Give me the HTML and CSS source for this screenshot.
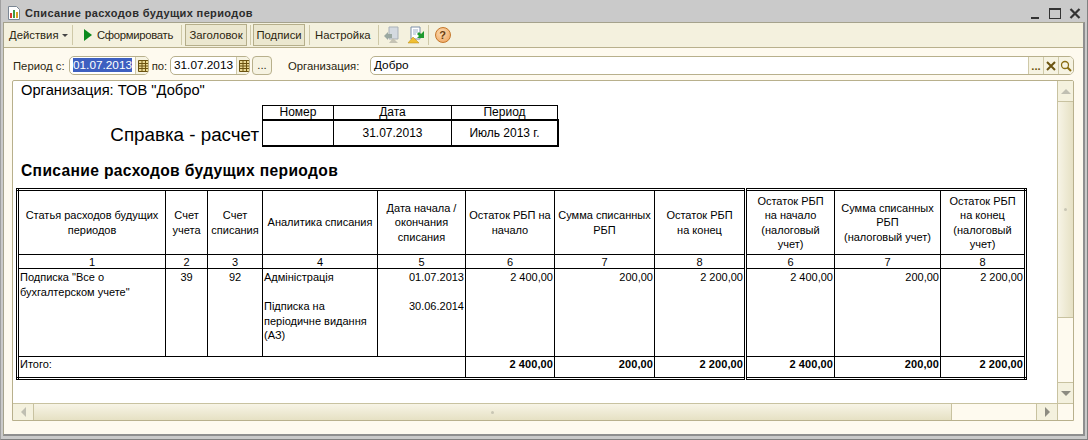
FILE: index.html
```html
<!DOCTYPE html>
<html lang="ru">
<head>
  <meta charset="UTF-8">
  <title>Списание расходов будущих периодов</title>
  <link rel="stylesheet" href="styles.css">
</head>
<body>

<div class="window">
  <div class="titlebar">
    <svg class="title-icon" width="14" height="14" viewBox="0 0 14 14">
      <path d="M1.500 .5h8l3 3v10h-11z" fill="#fff" stroke="#7b8794"/>
      <rect x="3" y="7" width="2" height="5" fill="#d6392c"/>
      <rect x="6" y="4" width="2" height="8" fill="#3f9a45"/>
      <rect x="9" y="6" width="2" height="6" fill="#d9a020"/>
    </svg>
    <span class="title-text">Списание расходов будущих периодов</span>
    <div class="win-buttons">
      <svg width="14" height="14" viewBox="0 0 14 14"><rect x="3" y="11" width="8" height="2" fill="#333"/></svg>
      <svg width="14" height="14" viewBox="0 0 14 14"><rect x="1.500" y="2.500" width="11" height="10" fill="none" stroke="#333"/><rect x="1" y="2" width="12" height="2" fill="#333"/></svg>
      <svg width="14" height="14" viewBox="0 0 14 14"><path d="M2.500 3l9 9M11.500 3l-9 9" stroke="#333" stroke-width="2.200"/></svg>
    </div>
  </div>

  <div class="panel">
    <div class="toolbar">
      <span class="tool menu">Действия <i class="caret"></i></span>
      <i class="sep"></i>
      <span class="tool run">
        <svg width="10" height="14" viewBox="0 0 10 14"><path d="M1 1l8 6-8 6z" fill="#0a8a1c"/></svg>
        <span class="run-text">Сформировать</span>
      </span>
      <i class="sep"></i>
      <span class="tool toggle toggle-head">Заголовок</span>
      <i class="sep"></i>
      <span class="tool toggle toggle-sign">Подписи</span>
      <i class="sep"></i>
      <span class="tool setup">Настройка</span>
      <i class="sep"></i>
      <svg class="tool-icon" width="18" height="18" viewBox="0 0 18 18">
        <path d="M6 1h9v12H6z" fill="#d4dae0" stroke="#a9b1b8"/>
        <path d="M1 10l4-4v2h4v4H5v2z" fill="#9aa8a0"/>
        <path d="M6 17l4-5 5 5z" fill="#c5c3b4"/>
      </svg>
      <svg class="tool-icon next-icon" width="18" height="18" viewBox="0 0 18 18">
        <path d="M4 1h9v12H4z" fill="#fff" stroke="#7d8fa8"/>
        <path d="M6 4h5M6 6h5M6 8h3" stroke="#9fb1c9"/>
        <path d="M17 5v7h-7l2-2-2-2 2-2 2 2z" fill="#1f9a30"/>
        <path d="M1 17l5-6 6 6z" fill="#f0bf33" stroke="#b98a12" stroke-width=".5"/>
      </svg>
      <i class="sep"></i>
      <span class="help">?</span>
    </div>

    <div class="filters">
      <label class="lbl lbl-from">Период с:</label>
      <span class="field date-field">
        <span class="field-text"><span class="selected">01.07.2013</span></span>
        <span class="field-btn">
          <svg class="cal" width="11" height="12" viewBox="0 0 11 12"><path d="M.5.500h10v11H.500zM.5 3.500h10M.5 6h10M.5 8.500h10M4 .5v11M7.500.500v11" fill="#e8d894" stroke="#6b5310"/></svg>
        </span>
      </span>
      <label class="lbl lbl-to">по:</label>
      <span class="field date-field">
        <span class="field-text">31.07.2013</span>
        <span class="field-btn">
          <svg class="cal" width="11" height="12" viewBox="0 0 11 12"><path d="M.5.500h10v11H.500zM.5 3.500h10M.5 6h10M.5 8.500h10M4 .5v11M7.500.500v11" fill="#e8d894" stroke="#6b5310"/></svg>
        </span>
      </span>
      <span class="dots-btn">...</span>
      <label class="lbl lbl-org">Организация:</label>
      <span class="field org-field">
        <span class="field-text">Добро</span>
        <span class="field-btn end-btn dots">...</span>
        <span class="field-btn end-btn">
          <svg width="10" height="10" viewBox="0 0 10 10"><path d="M1 1l8 8M9 1l-8 8" stroke="#6b5310" stroke-width="2"/></svg>
        </span>
        <span class="field-btn end-btn">
          <svg width="12" height="12" viewBox="0 0 12 12"><circle cx="5" cy="5" r="3.500" fill="none" stroke="#8a6d14" stroke-width="1.300"/><path d="M7.500 7.500l3.500 3.500" stroke="#8a6d14" stroke-width="2"/></svg>
        </span>
      </span>
    </div>

    <div class="sheet">
      <div class="report">
        <div class="org-line">Организация: ТОВ "Добро"</div>
        <div class="doc-head">
          <div class="doc-title">Справка - расчет</div>
          <table class="doc-table">
            <tr class="doc-labels"><td>Номер</td><td>Дата</td><td>Период</td></tr>
            <tr class="doc-values"><td></td><td>31.07.2013</td><td>Июль 2013 г.</td></tr>
          </table>
        </div>
        <div class="report-title">Списание расходов будущих периодов</div>

        <table class="grid">
          <colgroup>
            <col class="c1"><col class="c2"><col class="c3"><col class="c4"><col class="c5"><col class="c6">
            <col class="c7"><col class="c8"><col class="c9"><col class="c10"><col class="c11">
          </colgroup>
          <tr class="head-row">
            <td>Статья расходов будущих<br>периодов</td>
            <td>Счет<br>учета</td>
            <td>Счет<br>списания</td>
            <td>Аналитика списания</td>
            <td>Дата начала /<br>окончания<br>списания</td>
            <td>Остаток РБП на<br>начало</td>
            <td>Сумма списанных<br>РБП</td>
            <td>Остаток РБП<br>на конец</td>
            <td class="dbl">Остаток РБП<br>на начало<br>(налоговый<br>учет)</td>
            <td>Сумма списанных<br>РБП<br>(налоговый учет)</td>
            <td>Остаток РБП<br>на конец<br>(налоговый<br>учет)</td>
          </tr>
          <tr class="num-row">
            <td>1</td><td>2</td><td>3</td><td>4</td><td>5</td><td>6</td><td>7</td><td>8</td><td class="dbl">6</td><td>7</td><td>8</td>
          </tr>
          <tr class="data-row">
            <td>Подписка "Все о<br>бухгалтерском учете"</td>
            <td class="mid">39</td>
            <td class="mid">92</td>
            <td>Адміністрація<br><br>Підписка на<br>періодичне видання<br>(АЗ)</td>
            <td class="num">01.07.2013<br><br>30.06.2014</td>
            <td class="num">2 400,00</td>
            <td class="num">200,00</td>
            <td class="num">2 200,00</td>
            <td class="num dbl">2 400,00</td>
            <td class="num">200,00</td>
            <td class="num">2 200,00</td>
          </tr>
          <tr class="total-row">
            <td colspan="5">Итого:</td>
            <td class="sum">2 400,00</td>
            <td class="sum">200,00</td>
            <td class="sum">2 200,00</td>
            <td class="sum dbl">2 400,00</td>
            <td class="sum">200,00</td>
            <td class="sum">2 200,00</td>
          </tr>
        </table>
      </div>

      <div class="vbar">
        <span class="bar-btn"><i class="arrow up"></i></span>
        <span class="vthumb"><i class="grip"></i></span>
        <span class="bar-rest"></span>
        <span class="bar-btn"><i class="arrow down"></i></span>
      </div>
      <div class="hbar">
        <span class="bar-btn"><i class="arrow left"></i></span>
        <span class="hthumb"><i class="grip"></i></span>
        <span class="bar-rest"></span>
        <span class="bar-btn"><i class="arrow right"></i></span>
      </div>
      <div class="corner"></div>
    </div>
  </div>
</div>

</body>
</html>
```

FILE: styles.css
```css
* { box-sizing: border-box; }
html, body { margin: 0; height: 100%; overflow: hidden; }
body { font-family: "Liberation Sans", Arial, sans-serif; font-size: 11px; color: #000; background: #fff; }

.window {
  width: 1088px;
  height: 440px;
  display: flex;
  flex-direction: column;
  padding: 1px 2px 3px 2px;
  background: #cacaca;
  border-bottom: 1px solid #808080;
  border-right: 1px solid #808080;
  border-left: 1px solid #a0a0a0;
}

/* title */
.titlebar {
  height: 21px;
  flex: none;
  display: flex;
  align-items: center;
  padding: 2px 3px 0 4px;
}
.title-icon { margin-right: 4px; }
.title-text {
  font-weight: bold;
  font-size: 11px;
  letter-spacing: .37px;
  color: #2c2c2c;
}
.win-buttons { margin-left: auto; display: flex; gap: 6px; margin-right: 0; }

.panel {
  flex: 1;
  display: flex;
  flex-direction: column;
  background: #fefaef;
  border: 1px solid #a5a28c;
  border-right: 2px solid #8f8f8f;
  border-bottom: 2px solid #8f8f8f;
  min-height: 0;
}

/* toolbar */
.toolbar {
  height: 25px;
  flex: none;
  display: flex;
  align-items: center;
  padding-left: 5px;
  background: #f4f1de;
  border-bottom: 1px solid #b8b08c;
  font-size: 11.300px;
  color: #2b2610;
}
.tool { display: flex; align-items: center; height: 22px; white-space: nowrap; }
.menu { width: 59px; gap: 3px; }
.caret { width: 0; height: 0; border: 3px solid transparent; border-top: 3px solid #444; border-bottom: 0; }
.run { gap: 4px; padding: 0 4px 0 6px; }
.run-text { letter-spacing: -.3px; }
.toggle { justify-content: center; background: #ebe7cf; border: 1px solid #b5ae8a; }
.toggle-head { width: 62px; margin: 0 -1px; }
.toggle-sign { width: 52px; margin-left: -2px; }
.setup { padding: 0 3px 0 1px; }
.sep { width: 1px; height: 20px; background: #cfc9a8; margin: 0 4px; flex: none; }
.next-icon { margin: 0 -1px 0 6px; }
.help {
  width: 16px;
  height: 16px;
  margin-left: 2px;
  border-radius: 50%;
  background: radial-gradient(circle at 40% 35%, #fbdcb4, #ee9f55);
  border: 1px solid #c5772a;
  font-weight: bold;
  font-size: 11px;
  line-height: 14px;
  text-align: center;
  color: #6b3d10;
}

/* filter row */
.filters {
  height: 32px;
  flex: none;
  display: flex;
  align-items: center;
  padding: 3px 9px 0 8px;
  font-size: 11.300px;
  color: #2b2610;
}
.lbl { white-space: nowrap; }
.lbl-from { width: 57px; padding-left: 1px; }
.lbl-to { width: 21px; text-align: center; }
.lbl-org { margin: 0 12px 0 16px; width: 70px; }
.field {
  display: flex;
  align-items: stretch;
  height: 19px;
  background: #fff;
  border: 1px solid #b8b08c;
  border-radius: 5px;
  overflow: hidden;
  color: #000;
}
.date-field { width: 80px; }
.org-field { flex: 1; }
.field-text { flex: 1; padding: 2px 3px; white-space: nowrap; line-height: 13px; font-size: 11.800px; }
.selected { background: #3d5fc0; color: #fff; }
.field-btn {
  width: 15px;
  flex: none;
  display: flex;
  align-items: center;
  justify-content: center;
  background: #f6f3e2;
  border-left: 1px solid #cfc9a8;
  color: #6b5310;
}
.dots { font-weight: bold; align-items: flex-end; padding-bottom: 2px; }
.dots-btn {
  width: 20px;
  height: 19px;
  margin-left: 2px;
  text-align: center;
  line-height: 17px;
  background: #f6f3e2;
  border: 1px solid #b8b08c;
  border-radius: 4px;
}

/* report sheet */
.sheet {
  flex: 1;
  min-height: 0;
  display: grid;
  grid-template-columns: 1fr 16px;
  grid-template-rows: 1fr 17px;
  margin: 0 9px 13px 8px;
  background: #fff;
  border: 1px solid #b8b08c;
  border-radius: 2px 2px 0 0;
}
.report { overflow: hidden; padding: 0 0 0 3px; min-width: 0; min-height: 0; }
.org-line { font-size: 14.700px; line-height: 18px; padding-left: 5px; margin-bottom: 7px; }
.doc-head { display: flex; align-items: flex-end; height: 40px; }
.doc-title { width: 246px; text-align: right; font-size: 18.800px; line-height: 22px; padding: 1px 3px 0 0; }

.doc-table { width: 295px; border-collapse: collapse; table-layout: fixed; text-align: center; font-size: 12px; }
.doc-table td { padding: 0; }
.doc-labels td { height: 14px; line-height: 12px; border: 1px solid #000; }
.doc-values td { height: 26px; border: 1px solid #000; border-top-width: 2px; }
.doc-values { outline: 1px solid #000; }
.doc-table td:nth-child(1) { width: 71px; }
.doc-table td:nth-child(2) { width: 118px; }
.doc-table td:nth-child(3) { width: 106px; }

.report-title {
  font-weight: bold;
  font-size: 15.600px;
  line-height: 18px;
  padding-left: 5px;
  margin: 16px 0 8px 0;
  letter-spacing: .35px;
}

.grid {
  width: 1009px;
  table-layout: fixed;
  border-collapse: collapse;
  border: 3px double #000;
  line-height: 14.500px;
}
.grid td { border: 1px solid #000; padding: 0 1px; }
.grid td.dbl { border-left: 3px double #000; }
.c1 { width: 148px; } .c2 { width: 42px; } .c3 { width: 55px; } .c4 { width: 115px; }
.c5 { width: 88px; } .c6 { width: 89px; } .c7 { width: 100px; } .c8 { width: 91px; }
.c9 { width: 89px; } .c10 { width: 106px; } .c11 { width: 85px; }
.head-row { height: 65px; text-align: center; }
.head-row td { padding: 0; }
.num-row { height: 14px; text-align: center; line-height: 12px; }
.data-row { height: 88px; vertical-align: top; }
.data-row td { padding-top: 1px; }
.data-row .mid { text-align: center; }
.data-row .num { text-align: right; }
.total-row { height: 22px; vertical-align: top; line-height: 14px; }
.sum { text-align: right; font-weight: bold; letter-spacing: .1px; }

/* scrollbars */
.vbar { grid-column: 2; grid-row: 1; display: flex; flex-direction: column; border-left: 1px solid #c8c2a0; background: #fefaef; }
.hbar { grid-column: 1; grid-row: 2; display: flex; border-top: 1px solid #c8c2a0; background: #fefaef; }
.corner { grid-column: 2; grid-row: 2; background: #fefaef; border-top: 1px solid #c8c2a0; border-left: 1px solid #c8c2a0; }
.bar-btn { flex: none; display: flex; align-items: center; justify-content: center; background: #f4f1de; }
.vbar .bar-btn { height: 21px; }
.hbar .bar-btn { width: 21px; }
.hbar .bar-btn:first-child { border-right: 1px solid #c8c2a0; }
.hbar .bar-btn:nth-child(4) { border-left: 1px solid #c8c2a0; }
.vbar .bar-btn:first-child { border-bottom: 1px solid #c8c2a0; }
.vbar .bar-btn:last-child { border-top: 1px solid #c8c2a0; }
.vthumb {
  height: 216px;
  flex: none;
  display: flex;
  align-items: center;
  justify-content: center;
  background: linear-gradient(to right, #f7f4e6, #e6e1c4);
  border-bottom: 1px solid #c8c2a0;
}
.hthumb {
  width: 918px;
  flex: none;
  display: flex;
  align-items: center;
  justify-content: center;
  background: linear-gradient(to bottom, #f7f4e6, #e6e1c4);
  border-right: 1px solid #c8c2a0;
}
.bar-rest { flex: 1; }
.grip { width: 3px; height: 3px; border-radius: 50%; background: #c9c6b4; }
.arrow { width: 0; height: 0; border: 5px solid transparent; }
.up { border-bottom-color: #c0bfb2; border-top: 0; }
.down { border-top-color: #8c8b80; border-bottom: 0; }
.left { border-right-color: #c0bfb2; border-left: 0; }
.right { border-left-color: #8c8b80; border-right: 0; }
```
